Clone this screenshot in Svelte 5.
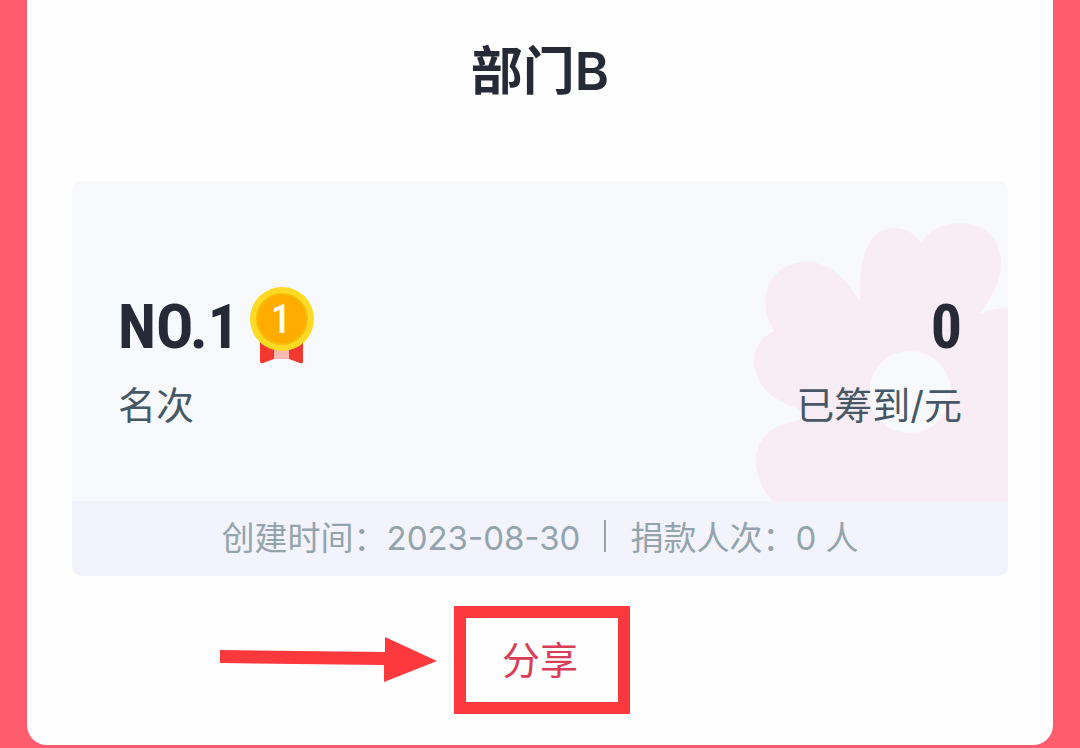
<script lang="ts">
  const team = {
    name: "部门B",
    rank: 1,
    raised: 0,
    createdAt: "2023-08-30",
    donors: 0,
  };
</script>

<main class="sheet">
  <h1>{team.name}</h1>

  <section class="card">
    <div class="stats">
      <svg class="flower" viewBox="0 0 256 280" aria-hidden="true">
        <path
          fill-rule="evenodd"
          d="M108 80C107 36 115 10 140 7C153 6 162 12 169 21C179 8 192 2 208 2C232 2 249 18 249 42C249 61 239 77 228 93Q241 87 256 87V280H21C10 269 4 254 4 238C5 218 19 204 44 200Q58 195 44 187C17 178 3 162 2 140C2 125 11 115 22 110C15 98 12 85 14 73C18 52 35 41 55 41C78 41 92 57 108 80ZM158 130a41 41 0 1 0 0 82a41 41 0 1 0 0-82Z"
        />
      </svg>

      <div class="stat">
        <div class="value">
          <span>NO.{team.rank}</span>
          <svg class="medal" viewBox="0 0 66 78" aria-hidden="true">
            <path d="M11 56H54V76Q54 78 51 77L40 73H25L14 77Q11 78 11 75Z" fill="#f5382f" />
            <path d="M25 60H40V73H25Z" fill="#fbb9b2" />
            <circle cx="33" cy="33" r="32" fill="#ffda24" />
            <circle cx="33" cy="33" r="25" fill="#ffab00" stroke="#f5bd0a" stroke-width="2" />
            <text x="32" y="47" text-anchor="middle">{team.rank}</text>
          </svg>
        </div>
        <div class="label">名次</div>
      </div>

      <div class="stat right">
        <div class="value">{team.raised}</div>
        <div class="label">已筹到/元</div>
      </div>
    </div>

    <footer>
      <span>创建时间：{team.createdAt}</span>
      <i class="divider"></i>
      <span>捐款人次：{team.donors} 人</span>
    </footer>
  </section>

  <div class="actions">
    <svg class="arrow" viewBox="0 0 217 46" aria-hidden="true">
      <path d="M0 13L165 15V0L217 24L164 45V28L0 26Z" />
    </svg>
    <button type="button">分享</button>
  </div>
</main>

<style>
  :global(body) {
    margin: 0;
    background: #ff5c6e;
  }

  .sheet {
    margin: 0 27px;
    padding: 32px 45px 31px;
    border-radius: 0 0 20px 20px;
    background: #fefefe;
    color: #252a36;
    font-family: Inter, "Noto Sans CJK SC", sans-serif;
  }

  h1 {
    margin: 0 0 69px;
    font-size: 52px;
    line-height: 80px;
    font-weight: 600;
    text-align: center;
  }

  .card {
    overflow: hidden;
    border-radius: 10px;
    background: #f8f9fd;
  }

  .stats {
    position: relative;
    display: flex;
    justify-content: space-between;
    padding: 104px 46px 60px;
  }

  .flower {
    position: absolute;
    right: 0;
    bottom: 0;
    width: 256px;
    height: 280px;
    fill: #f8edf4;
  }

  .stat {
    position: relative;
  }

  .right {
    text-align: right;
  }

  .value {
    display: flex;
    align-items: center;
    gap: 10px;
    height: 84px;
    font-family: "Roboto Condensed", "Liberation Sans Narrow", Roboto, sans-serif;
    font-size: 62px;
    line-height: 84px;
    font-weight: 700;
  }

  .right .value {
    justify-content: flex-end;
  }

  .medal {
    width: 66px;
    height: 78px;
    margin-bottom: 4px;
  }

  .medal text {
    fill: #fffdf2;
    font-size: 40px;
    font-weight: 500;
  }

  .label {
    color: #465866;
    font-size: 38px;
    line-height: 72px;
  }

  footer {
    box-sizing: border-box;
    display: flex;
    justify-content: center;
    align-items: center;
    gap: 24px;
    height: 75px;
    padding-bottom: 6px;
    background: #f2f3fd;
    color: #93a4ac;
    font-size: 33px;
  }

  .divider {
    width: 2px;
    height: 32px;
    background: #93a4ac;
  }

  .actions {
    display: grid;
    grid-template-columns: 1fr auto 1fr;
    align-items: center;
    gap: 17px;
    margin-top: 30px;
    padding-left: 4px;
  }

  .arrow {
    justify-self: end;
    width: 217px;
    height: 46px;
    fill: #fd393e;
  }

  button {
    width: 176px;
    height: 108px;
    padding: 0 4px 6px 0;
    border: 12px solid #fd393e;
    background: #fefefe;
    color: #d63f57;
    font-family: inherit;
    font-size: 38px;
    cursor: pointer;
  }
</style>
